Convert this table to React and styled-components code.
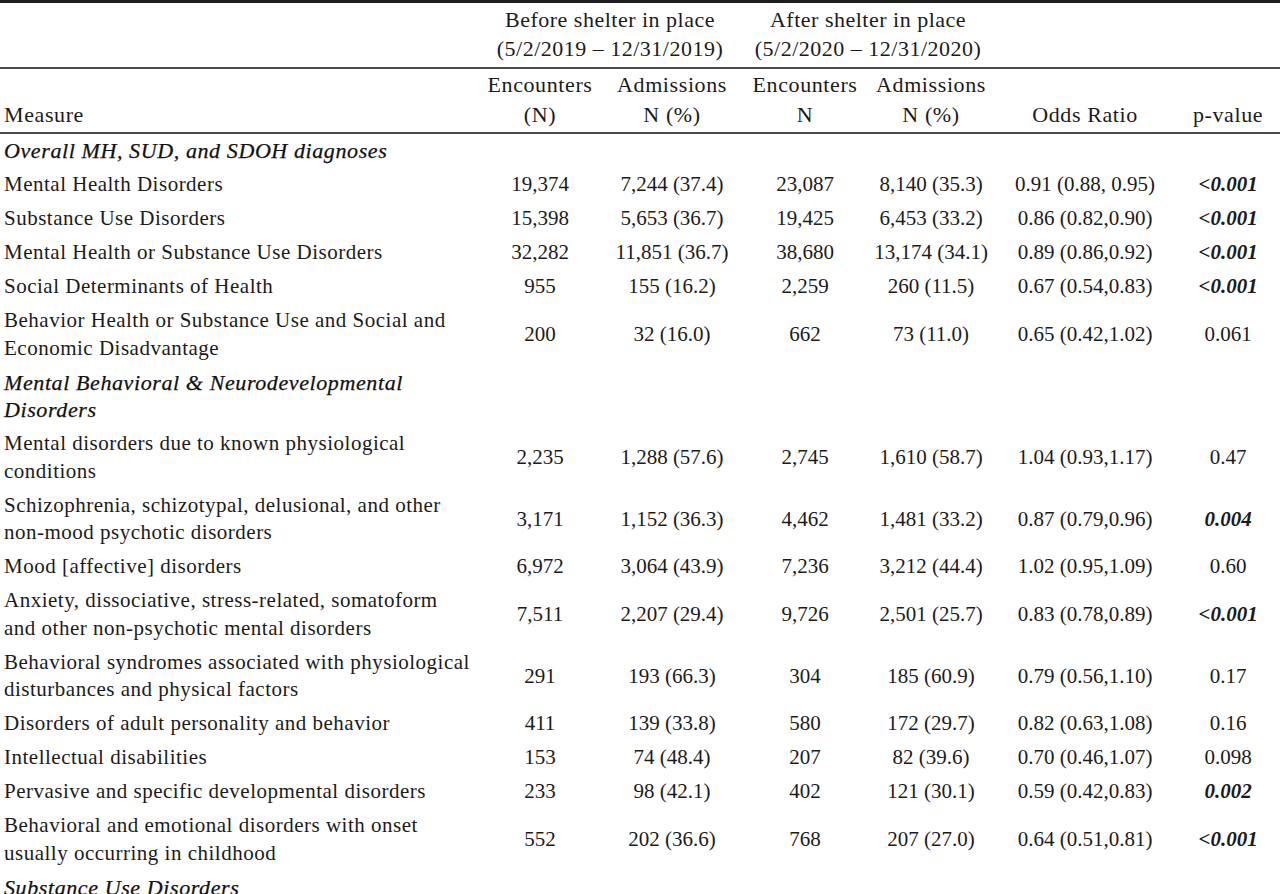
import React from "react";
import styled, { createGlobalStyle } from "styled-components";

const Global = createGlobalStyle`
  html, body { margin: 0; padding: 0; background: #ffffff; }
  body {
    font-family: "Liberation Serif", "Times New Roman", serif;
    color: #1b1b1b;
  }
`;

const Table = styled.table`
  width: 1280px;
  border-collapse: collapse;
  table-layout: fixed;
  font-size: 21px;
  border-top: 3px solid #1e1e1e;
`;

const Col = styled.col`
  width: ${(p) => p.$w}px;
`;

const GroupCell = styled.th`
  font-weight: 400;
  font-size: 22px;
  letter-spacing: 0.5px;
  text-align: center;
  line-height: 29px;
  padding: 2px 4px 4px;
  border-bottom: 2px solid #4a4a4a;
  vertical-align: bottom;
  white-space: nowrap;
`;

const HeadCell = styled.th`
  font-weight: 400;
  font-size: 22px;
  text-align: ${(p) => (p.$left ? "left" : "center")};
  line-height: 30px;
  padding: 1px 4px 2px;
  border-bottom: 2px solid #4a4a4a;
  vertical-align: bottom;
  white-space: nowrap;
  letter-spacing: 0.6px;
`;

const SectionCell = styled.td`
  font-style: italic;
  font-size: 22px;
  line-height: 27.5px;
  padding: 3.25px 4px;
  letter-spacing: 0.6px;
  color: #111;
  -webkit-text-stroke: 0.25px #111;
`;

const MeasureCell = styled.td`
  line-height: 27.5px;
  padding: 3.25px 4px;
  letter-spacing: 0.5px;
  vertical-align: middle;
  white-space: nowrap;
`;

const ValueCell = styled.td`
  line-height: 27.5px;
  padding: 3.25px 2px;
  text-align: center;
  vertical-align: middle;
  white-space: nowrap;
  font-style: ${(p) => (p.$sig ? "italic" : "normal")};
  font-weight: ${(p) => (p.$sig ? 700 : 400)};
`;

const widths = [478, 124, 140, 126, 126, 182, 104];

const SIG = true;
const data = [
  { section: ["Overall MH, SUD, and SDOH diagnoses"] },
  { m: ["Mental Health Disorders"], v: ["19,374", "7,244 (37.4)", "23,087", "8,140 (35.3)", "0.91 (0.88, 0.95)", "<0.001"], sig: SIG },
  { m: ["Substance Use Disorders"], v: ["15,398", "5,653 (36.7)", "19,425", "6,453 (33.2)", "0.86 (0.82,0.90)", "<0.001"], sig: SIG },
  { m: ["Mental Health or Substance Use Disorders"], v: ["32,282", "11,851 (36.7)", "38,680", "13,174 (34.1)", "0.89 (0.86,0.92)", "<0.001"], sig: SIG },
  { m: ["Social Determinants of Health"], v: ["955", "155 (16.2)", "2,259", "260 (11.5)", "0.67 (0.54,0.83)", "<0.001"], sig: SIG },
  { m: ["Behavior Health or Substance Use and Social and", "Economic Disadvantage"], v: ["200", "32 (16.0)", "662", "73 (11.0)", "0.65 (0.42,1.02)", "0.061"] },
  { section: ["Mental Behavioral & Neurodevelopmental", "Disorders"] },
  { m: ["Mental disorders due to known physiological", "conditions"], v: ["2,235", "1,288 (57.6)", "2,745", "1,610 (58.7)", "1.04 (0.93,1.17)", "0.47"] },
  { m: ["Schizophrenia, schizotypal, delusional, and other", "non-mood psychotic disorders"], v: ["3,171", "1,152 (36.3)", "4,462", "1,481 (33.2)", "0.87 (0.79,0.96)", "0.004"], sig: SIG },
  { m: ["Mood [affective] disorders"], v: ["6,972", "3,064 (43.9)", "7,236", "3,212 (44.4)", "1.02 (0.95,1.09)", "0.60"] },
  { m: ["Anxiety, dissociative, stress-related, somatoform", "and other non-psychotic mental disorders"], v: ["7,511", "2,207 (29.4)", "9,726", "2,501 (25.7)", "0.83 (0.78,0.89)", "<0.001"], sig: SIG },
  { m: ["Behavioral syndromes associated with physiological", "disturbances and physical factors"], v: ["291", "193 (66.3)", "304", "185 (60.9)", "0.79 (0.56,1.10)", "0.17"] },
  { m: ["Disorders of adult personality and behavior"], v: ["411", "139 (33.8)", "580", "172 (29.7)", "0.82 (0.63,1.08)", "0.16"] },
  { m: ["Intellectual disabilities"], v: ["153", "74 (48.4)", "207", "82 (39.6)", "0.70 (0.46,1.07)", "0.098"] },
  { m: ["Pervasive and specific developmental disorders"], v: ["233", "98 (42.1)", "402", "121 (30.1)", "0.59 (0.42,0.83)", "0.002"], sig: SIG },
  { m: ["Behavioral and emotional disorders with onset", "usually occurring in childhood"], v: ["552", "202 (36.6)", "768", "207 (27.0)", "0.64 (0.51,0.81)", "<0.001"], sig: SIG },
  { section: ["Substance Use Disorders"] },
];

const Lines = ({ parts }) =>
  parts.map((p, i) => (
    <React.Fragment key={i}>
      {i > 0 && <br />}
      {p}
    </React.Fragment>
  ));

export default function App() {
  return (
    <>
      <Global />
      <Table>
        <colgroup>
          {widths.map((w, i) => (
            <Col key={i} $w={w} />
          ))}
        </colgroup>
        <thead>
          <tr>
            <GroupCell />
            <GroupCell colSpan={2}>
              Before shelter in place
              <br />
              (5/2/2019 – 12/31/2019)
            </GroupCell>
            <GroupCell colSpan={2}>
              After shelter in place
              <br />
              (5/2/2020 – 12/31/2020)
            </GroupCell>
            <GroupCell />
            <GroupCell />
          </tr>
          <tr>
            <HeadCell $left>Measure</HeadCell>
            <HeadCell>
              Encounters
              <br />
              (N)
            </HeadCell>
            <HeadCell>
              Admissions
              <br />
              N (%)
            </HeadCell>
            <HeadCell>
              Encounters
              <br />N
            </HeadCell>
            <HeadCell>
              Admissions
              <br />
              N (%)
            </HeadCell>
            <HeadCell>Odds Ratio</HeadCell>
            <HeadCell>p-value</HeadCell>
          </tr>
        </thead>
        <tbody>
          {data.map((row, i) =>
            row.section ? (
              <tr key={i}>
                <SectionCell colSpan={7}>
                  <Lines parts={row.section} />
                </SectionCell>
              </tr>
            ) : (
              <tr key={i}>
                <MeasureCell>
                  <Lines parts={row.m} />
                </MeasureCell>
                {row.v.map((v, j) => (
                  <ValueCell key={j} $sig={row.sig && j === 5}>
                    {v}
                  </ValueCell>
                ))}
              </tr>
            )
          )}
        </tbody>
      </Table>
    </>
  );
}
